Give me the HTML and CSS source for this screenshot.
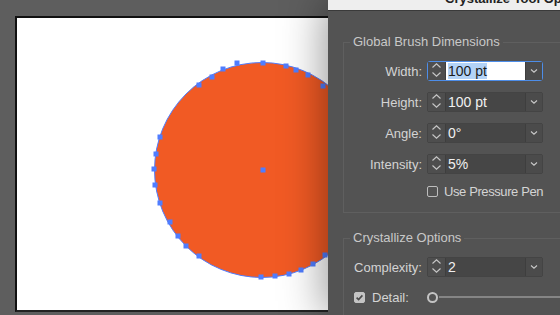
FILE: index.html
```html
<!DOCTYPE html>
<html lang="en">
<head>
  <meta charset="UTF-8" />
  <title>Crystallize Tool Options</title>
  <link rel="stylesheet" href="styles.css">
</head>
<body>

  <div class="canvas">
    <div class="artboard">
      <svg class="art" width="338" height="292" viewBox="17 18 338 292">
        <circle cx="262" cy="170" r="107.5" fill="#f15a24" stroke="#4f7dff" stroke-width="1" />
        <g fill="#4f7dff">
          <rect x="234.5" y="60.5" width="5" height="5" />
          <rect x="260.5" y="60.5" width="5" height="5" />
          <rect x="283.5" y="63.5" width="5" height="5" />
          <rect x="293.5" y="67.5" width="5" height="5" />
          <rect x="305.5" y="72.5" width="5" height="5" />
          <rect x="320.5" y="83.5" width="5" height="5" />
          <rect x="220.5" y="66.5" width="5" height="5" />
          <rect x="209.5" y="74.5" width="5" height="5" />
          <rect x="196.5" y="82.5" width="5" height="5" />
          <rect x="157.5" y="134.5" width="5" height="5" />
          <rect x="153.5" y="151.5" width="5" height="5" />
          <rect x="151.5" y="166.5" width="5" height="5" />
          <rect x="152.5" y="182.5" width="5" height="5" />
          <rect x="157.5" y="200.5" width="5" height="5" />
          <rect x="167.5" y="219.5" width="5" height="5" />
          <rect x="175.5" y="233.5" width="5" height="5" />
          <rect x="183.5" y="243.5" width="5" height="5" />
          <rect x="196.5" y="253.5" width="5" height="5" />
          <rect x="258.5" y="274.5" width="5" height="5" />
          <rect x="272.5" y="273.5" width="5" height="5" />
          <rect x="286.5" y="271.5" width="5" height="5" />
          <rect x="298.5" y="267.5" width="5" height="5" />
          <rect x="310.5" y="261.5" width="5" height="5" />
          <rect x="322.5" y="252.5" width="5" height="5" />
          <rect x="260.5" y="167.5" width="5" height="5" />
        </g>
      </svg>
    </div>
  </div>

  <div class="dialog">
    <div class="titlebar">
      <div class="title">Crystallize Tool Options</div>
    </div>

    <div class="dialog-body">
      <fieldset class="group">
        <legend>Global Brush Dimensions</legend>
        <div class="rows">
          <label class="label">Width:</label>
          <div class="field focus">
            <span class="spin">
              <svg width="17" height="18" viewBox="0 0 17 18"><path d="M4.5 5.5 L8.5 1.8 L12.5 5.5 M4.5 10.5 L8.5 14.2 L12.5 10.5" /></svg>
            </span>
            <span class="value"><span class="sel">100 pt</span></span>
            <span class="drop">
              <svg width="16" height="18" viewBox="0 0 16 18"><path d="M5 7.5 L8 10.2 L11 7.5" /></svg>
            </span>
          </div>

          <label class="label">Height:</label>
          <div class="field">
            <span class="spin">
              <svg width="17" height="18" viewBox="0 0 17 18"><path d="M4.5 5.5 L8.5 1.8 L12.5 5.5 M4.5 10.5 L8.5 14.2 L12.5 10.5" /></svg>
            </span>
            <span class="value">100 pt</span>
            <span class="drop">
              <svg width="16" height="18" viewBox="0 0 16 18"><path d="M5 7.5 L8 10.2 L11 7.5" /></svg>
            </span>
          </div>

          <label class="label">Angle:</label>
          <div class="field">
            <span class="spin">
              <svg width="17" height="18" viewBox="0 0 17 18"><path d="M4.5 5.5 L8.5 1.8 L12.5 5.5 M4.5 10.5 L8.5 14.2 L12.5 10.5" /></svg>
            </span>
            <span class="value">0°</span>
            <span class="drop">
              <svg width="16" height="18" viewBox="0 0 16 18"><path d="M5 7.5 L8 10.2 L11 7.5" /></svg>
            </span>
          </div>

          <label class="label">Intensity:</label>
          <div class="field">
            <span class="spin">
              <svg width="17" height="18" viewBox="0 0 17 18"><path d="M4.5 5.5 L8.5 1.8 L12.5 5.5 M4.5 10.5 L8.5 14.2 L12.5 10.5" /></svg>
            </span>
            <span class="value">5%</span>
            <span class="drop">
              <svg width="16" height="18" viewBox="0 0 16 18"><path d="M5 7.5 L8 10.2 L11 7.5" /></svg>
            </span>
          </div>

          <div class="check-row">
            <span class="box"></span>
            <span>Use Pressure Pen</span>
          </div>
        </div>
      </fieldset>

      <fieldset class="group">
        <legend>Crystallize Options</legend>
        <div class="rows">
          <label class="label">Complexity:</label>
          <div class="field">
            <span class="spin">
              <svg width="17" height="18" viewBox="0 0 17 18"><path d="M4.5 5.5 L8.5 1.8 L12.5 5.5 M4.5 10.5 L8.5 14.2 L12.5 10.5" /></svg>
            </span>
            <span class="value">2</span>
            <span class="drop">
              <svg width="16" height="18" viewBox="0 0 16 18"><path d="M5 7.5 L8 10.2 L11 7.5" /></svg>
            </span>
          </div>

          <div class="detail">
            <span class="box checked">
              <svg width="11" height="11" viewBox="0 0 11 11"><path d="M2.6 5.6 L4.6 7.6 L8.4 3.4" /></svg>
            </span>
            <span>Detail:</span>
          </div>
          <div class="slider">
            <span class="thumb"></span>
            <span class="track"></span>
          </div>
        </div>
      </fieldset>
    </div>
  </div>

</body>
</html>
```
FILE: styles.css
```css
* {
  box-sizing: border-box;
}

html, body {
  margin: 0;
  padding: 0;
}

body {
  width: 560px;
  height: 315px;
  overflow: hidden;
  display: flex;
  background: #5e5e5e;
  font-family: "Liberation Sans", Arial, sans-serif;
}

/* Canvas */
.canvas {
  flex: 0 0 328px;
  padding: 16px 0 0 15px;
  overflow: hidden;
}

.artboard {
  width: 340px;
  height: 296px;
  background: #fff;
  border-top: 2px solid #111;
  border-left: 2px solid #111;
  border-bottom: 2px solid #222;
}

.art {
  display: block;
}

/* Dialog */
.dialog {
  flex: 0 0 340px;
  position: relative;
  background: #535353;
  box-shadow: -4px 0 40px rgba(0, 0, 0, 0.4);
}

.titlebar {
  height: 11px;
  background: #eeeeee;
  border-bottom: 1px solid #3a3a3a;
  overflow: hidden;
  padding-left: 117px;
}

.title {
  margin-top: -8px;
  font-size: 13px;
  line-height: 13px;
  font-weight: bold;
  color: #222;
  white-space: nowrap;
}

.dialog-body {
  padding: 23px 0 0 15px;
}

.group {
  margin: 0 0 17px;
  padding: 11px 0 14px;
  border: 1px solid #5f5f5f;
  min-width: 0;
}

.group legend {
  margin-left: 6px;
  padding: 0 3px;
  font-size: 13px;
  line-height: 16px;
  color: #c8c8c8;
}

.rows {
  display: grid;
  grid-template-columns: 78px 1fr;
  column-gap: 5px;
  row-gap: 11px;
  align-items: center;
}

.label {
  text-align: right;
  font-size: 13px;
  color: #d4d4d4;
}

.field {
  display: flex;
  width: 116px;
  height: 20px;
  border: 1px solid #444;
  border-radius: 2px;
  background: #464646;
}

.field svg {
  display: block;
  fill: none;
  stroke: #c8c8c8;
  stroke-width: 1.1;
}

.spin {
  width: 18px;
  border-right: 1px solid #3e3e3e;
  background: #4e4e4e;
}

.value {
  flex: 1;
  padding-left: 2px;
  font-size: 14px;
  line-height: 18px;
  color: #f0f0f0;
}

.drop {
  width: 17px;
  border-left: 1px solid #3e3e3e;
  background: #4b4b4b;
}

.field.focus {
  border-color: #4d8de8;
  border-radius: 3px;
}

.field.focus .value {
  background: #fff;
  color: #1c1c1c;
}

.sel {
  background: #b3d3f7;
}

.check-row {
  grid-column: 2;
  display: flex;
  align-items: center;
  gap: 6px;
  height: 13px;
  font-size: 13px;
  letter-spacing: -0.4px;
  color: #d4d4d4;
}

.box {
  width: 11px;
  height: 11px;
  border: 1px solid #bdbdbd;
  border-radius: 2px;
}

.box.checked {
  background: #c4c4c4;
  border-color: #c4c4c4;
}

.box.checked svg {
  display: block;
  margin: -1px;
  fill: none;
  stroke: #4a4a4a;
  stroke-width: 1.6;
}

.detail {
  display: flex;
  align-items: center;
  gap: 7px;
  height: 18px;
  padding-left: 10px;
  font-size: 13px;
  color: #d4d4d4;
}

.slider {
  display: flex;
  align-items: center;
  height: 18px;
}

.thumb {
  width: 11px;
  height: 11px;
  border: 2px solid #c4c4c4;
  border-radius: 50%;
}

.track {
  flex: 1;
  height: 2px;
  margin-left: 1px;
  background: #858585;
}
```
